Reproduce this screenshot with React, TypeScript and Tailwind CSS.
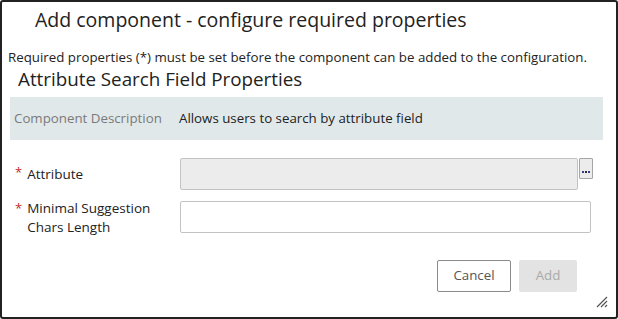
import React from "react"

const font = { fontFamily: '"Open Sans", "Noto Sans", sans-serif' }

function ResizeGrip() {
  return (
    <svg width="12" height="12" viewBox="0 0 12 12" className="absolute right-[8px] bottom-[9px]">
      <path d="M11 1 L1 11 M11 5 L5 11 M11 9 L9 11" stroke="#555" strokeWidth="1.2" />
    </svg>
  )
}

export default function App() {
  return (
    <div
      className="relative w-[618px] h-[319px] border-2 border-[#222] rounded-[3px] bg-white text-[#333] overflow-hidden"
      style={font}
    >
      <h2 className="ml-[33px] mt-[4px] text-[19.5px] leading-[27px] text-[#222]">
        Add component - configure required properties
      </h2>

      <p className="ml-[6px] mt-[15px] text-[13.3px] leading-[18px] text-[#222]">
        Required properties (*) must be set before the component can be added to the configuration.
      </p>

      <h3 className="ml-[16px] mt-[2px] text-[18.8px] leading-[23px] text-[#222]">
        Attribute Search Field Properties
      </h3>

      <div className="ml-[8px] mr-[13px] mt-[6px] h-[43px] bg-[#e1e8ea] flex items-center text-[13.3px]">
        <span className="w-[169px] pl-[4px] text-[#7a7a7a]">Component Description</span>
        <span className="text-[#222]">Allows users to search by attribute field</span>
      </div>

      <div className="mt-[18px] flex items-start text-[13.5px]">
        <div className="w-[178px] h-[32px] flex items-center pl-[13px]">
          <span className="text-[#c62828] mr-[5px] self-start mt-[5px] text-[13px]">*</span>
          <span className="text-[#222]">Attribute</span>
        </div>
        <div className="w-[398px] h-[32px] bg-[#ececec] border border-[#c3c3c3] rounded-[2px]" />
        <button className="ml-[1px] w-[14px] h-[21px] bg-[#ececec] border border-[#a5a5a5] rounded-[1px] flex items-end justify-center pb-[5px]">
          <span className="flex gap-[1px]">
            <span className="w-[2px] h-[2px] bg-[#3a3a8a]" />
            <span className="w-[2px] h-[2px] bg-[#2a2a2a]" />
            <span className="w-[2px] h-[2px] bg-[#3a3a8a]" />
          </span>
        </button>
      </div>

      <div className="mt-[11px] flex items-start text-[13.5px]">
        <div className="w-[178px] flex pl-[13px] -mt-[2px]">
          <span className="text-[#c62828] mr-[5px] text-[13px] leading-[19px]">*</span>
          <span className="text-[#222] leading-[19px]">
            Minimal Suggestion
            <br />
            Chars Length
          </span>
        </div>
        <div className="w-[411px] h-[32px] bg-white border border-[#c3c3c3] rounded-[2px]" />
      </div>

      <div className="mt-[23px] flex justify-end gap-[8px] pr-[39px] text-[13.3px]">
        <button className="w-[74px] h-[32px] border border-[#8a8a8a] rounded-[2px] bg-white text-[#555]">
          Cancel
        </button>
        <button className="w-[58px] h-[32px] rounded-[2px] bg-[#e3e3e3] text-[#aaa]">
          Add
        </button>
      </div>

      <ResizeGrip />
    </div>
  )
}
